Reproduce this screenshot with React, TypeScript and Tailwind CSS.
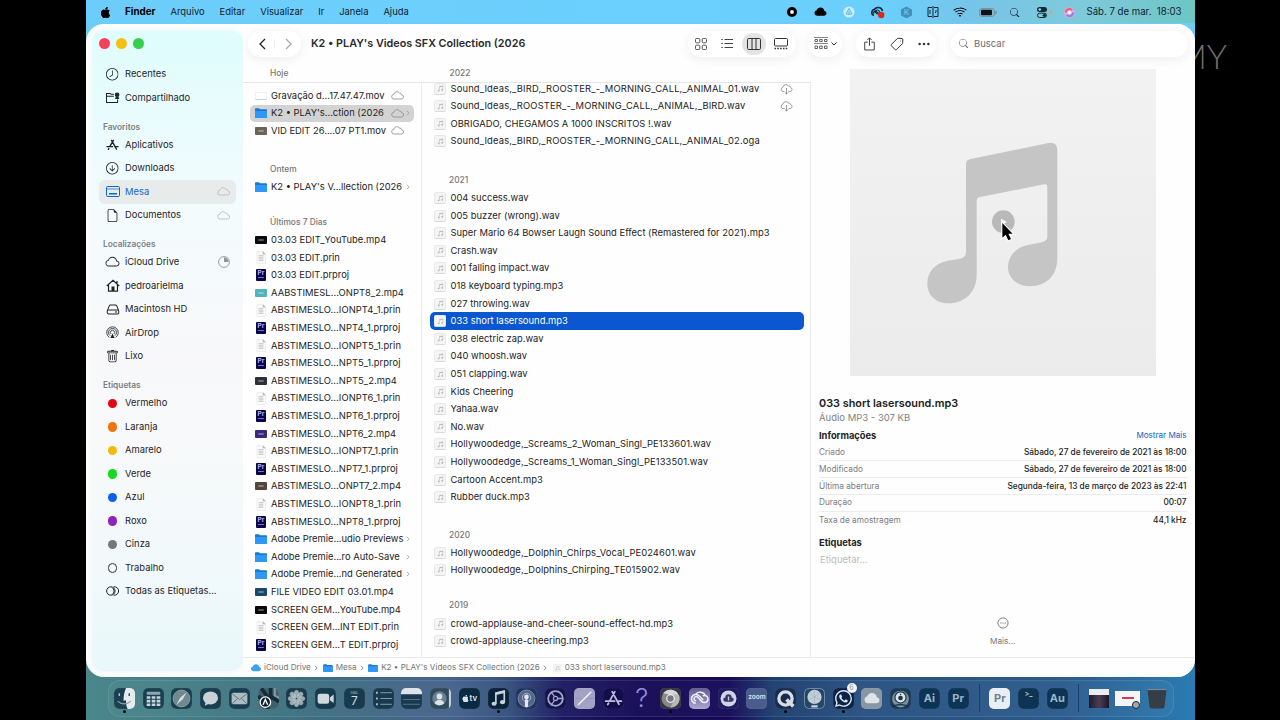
import React from "react";
import { BsApple, BsArrowDownCircle, BsClock, BsCloud, BsCloudFill, BsFileEarmark, BsSearch, BsThreeDots, BsTrash, BsWifi, BsWhatsapp } from "react-icons/bs";

/* ---------- data ---------- */

const menus = ["Arquivo", "Editar", "Visualizar", "Ir", "Janela", "Ajuda"];

const tags = [
  { name: "Vermelho", color: "#e30613" },
  { name: "Laranja", color: "#ec760c" },
  { name: "Amarelo", color: "#f0bb0c" },
  { name: "Verde", color: "#16d81c" },
  { name: "Azul", color: "#0a62ea" },
  { name: "Roxo", color: "#8f23bd" },
  { name: "Cinza", color: "#757779" },
];

type Item = { name: string; kind: string; cloud?: boolean; selected?: boolean; c?: string };

const today: Item[] = [
  { name: "Gravação d...17.47.47.mov", kind: "blank", cloud: true },
  { name: "K2 • PLAY's...ction (2026", kind: "folder", cloud: true, selected: true },
  { name: "VID EDIT 26....07 PT1.mov", kind: "video", c: "#6b6259", cloud: true },
];

const yesterday: Item[] = [{ name: "K2 • PLAY's V...llection (2026", kind: "folder" }];

const lastWeek: Item[] = [
  { name: "03.03 EDIT_YouTube.mp4", kind: "video", c: "#080a10" },
  { name: "03.03 EDIT.prin", kind: "doc" },
  { name: "03.03 EDIT.prproj", kind: "pr" },
  { name: "AABSTIMESL...ONPT8_2.mp4", kind: "video", c: "#4db5bb" },
  { name: "ABSTIMESLO...IONPT4_1.prin", kind: "doc" },
  { name: "ABSTIMESLO...NPT4_1.prproj", kind: "pr" },
  { name: "ABSTIMESLO...IONPT5_1.prin", kind: "doc" },
  { name: "ABSTIMESLO...NPT5_1.prproj", kind: "pr" },
  { name: "ABSTIMESLO...NPT5_2.mp4", kind: "video", c: "#2c3037" },
  { name: "ABSTIMESLO...IONPT6_1.prin", kind: "doc" },
  { name: "ABSTIMESLO...NPT6_1.prproj", kind: "pr" },
  { name: "ABSTIMESLO...NPT6_2.mp4", kind: "video", c: "#38287c" },
  { name: "ABSTIMESLO...IONPT7_1.prin", kind: "doc" },
  { name: "ABSTIMESLO...NPT7_1.prproj", kind: "pr" },
  { name: "ABSTIMESLO...ONPT7_2.mp4", kind: "video", c: "#54463d" },
  { name: "ABSTIMESLO...IONPT8_1.prin", kind: "doc" },
  { name: "ABSTIMESLO...NPT8_1.prproj", kind: "pr" },
  { name: "Adobe Premie...udio Previews", kind: "folder" },
  { name: "Adobe Premie...ro Auto-Save", kind: "folder" },
  { name: "Adobe Premie...nd Generated", kind: "folder" },
  { name: "FILE VIDEO EDIT 03.01.mp4", kind: "video", c: "#17496a" },
  { name: "SCREEN GEM...YouTube.mp4", kind: "video", c: "#08080a" },
  { name: "SCREEN GEM...INT EDIT.prin", kind: "doc" },
  { name: "SCREEN GEM...T EDIT.prproj", kind: "pr" },
];

const files2022 = [
  "Sound_Ideas,_BIRD,_ROOSTER_-_MORNING_CALL,_ANIMAL_01.wav",
  "Sound_Ideas,_ROOSTER_-_MORNING_CALL,_ANIMAL,_BIRD.wav",
  "OBRIGADO, CHEGAMOS A 1000 INSCRITOS !.wav",
  "Sound_Ideas,_BIRD,_ROOSTER_-_MORNING_CALL,_ANIMAL_02.oga",
];
const files2021 = [
  "004 success.wav",
  "005 buzzer (wrong).wav",
  "Super Mario 64 Bowser Laugh Sound Effect (Remastered for 2021).mp3",
  "Crash.wav",
  "001 falling impact.wav",
  "018 keyboard typing.mp3",
  "027 throwing.wav",
  "033 short lasersound.mp3",
  "038 electric zap.wav",
  "040 whoosh.wav",
  "051 clapping.wav",
  "Kids Cheering",
  "Yahaa.wav",
  "No.wav",
  "Hollywoodedge,_Screams_2_Woman_Singl_PE133601.wav",
  "Hollywoodedge,_Screams_1_Woman_Singl_PE133501.wav",
  "Cartoon Accent.mp3",
  "Rubber duck.mp3",
];

const info = [
  ["Criado", "Sábado, 27 de fevereiro de 2021 às 18:00"],
  ["Modificado", "Sábado, 27 de fevereiro de 2021 às 18:00"],
  ["Última abertura", "Segunda-feira, 13 de março de 2023 às 22:41"],
  ["Duração", "00:07"],
  ["Taxa de amostragem", "44,1 kHz"],
];

/* ---------- small icons ---------- */

function CloudIcon({ className = "" }: { className?: string }) {
  return (
    <svg viewBox="0 0 13 10" className={`-mt-px h-[10px] w-[13px] shrink-0 ${className}`} fill="none" stroke="currentColor" strokeWidth="0.8">
      <path d="M3 9h7.3a2.1 2.1 0 0 0 .3-4.2A2 2 0 0 0 8.4 3 3 3 0 0 0 2.9 4.4 2.3 2.3 0 0 0 3 9Z" />
    </svg>
  );
}

function CloudDownIcon() {
  return (
    <svg viewBox="0 0 13 12" className="mr-px h-[12px] w-[13px] shrink-0 text-[#858585]" fill="none" stroke="currentColor" strokeWidth="0.8">
      <path d="M4.5 8.5H3a2.2 2.2 0 0 1-.1-4.3A3 3 0 0 1 8.4 3a2 2 0 0 1 2.2 1.6 2 2 0 0 1-.3 3.9H8.5M6.500 5v6M4.900 9.500l1.600 1.600 1.600-1.600" />
    </svg>
  );
}

function Chevron({ className = "" }: { className?: string }) {
  return (
    <svg viewBox="0 0 5 8" className={`h-[6px] w-[4px] shrink-0 ${className}`} fill="none" stroke="currentColor" strokeWidth="1.1">
      <path d="m1 1 3 3-3 3" />
    </svg>
  );
}

function FolderIcon({ className = "h-[10px] w-[12px]" }: { className?: string }) {
  return (
    <svg viewBox="0 0 12 10" className={`shrink-0 ${className}`}>
      <path d="M0 1.2C0 .5.4.2 1 .2h3l1 1h6c.6 0 1 .3 1 1V9c0 .6-.4 1-1 1H1c-.6 0-1-.4-1-1Z" fill="#1878d2" />
      <path d="M0 2.9h12V9c0 .6-.4 1-1 1H1c-.6 0-1-.4-1-1Z" fill="#2f97f5" />
    </svg>
  );
}

function AudioIcon() {
  return (
    <span className="flex h-[12px] w-[12px] shrink-0 items-center justify-center rounded-[2px] border border-[#e9e9e9] border-b-[#dadada] bg-[#f4f4f4]">
      <svg viewBox="0 0 8 8" className="h-[7px] w-[7px]" fill="#bcbcbc">
        <path d="M2.400 1.400 7 .6v5a1.100 1 0 1 1-.6-.9V2L3 2.600v3.700a1.100 1 0 1 1-.6-.9Z" />
      </svg>
    </span>
  );
}

function FileIcon({ item }: { item: Item }) {
  if (item.kind === "folder") return <FolderIcon />;
  if (item.kind === "doc")
    return (
      <svg viewBox="0 0 12 13" className="h-[13px] w-[12px] shrink-0">
        <path d="M2 .6h6l2.500 2.500v9.300H2Z" fill="#fafafa" stroke="#e3e3e3" strokeWidth="0.6" />
        <path d="M8 .6v2.500h2.500" fill="#bbb" stroke="#b5b5b5" strokeWidth="0.6" />
        <path d="M3.600 4.600h4.800M3.600 6.200h4.800M3.600 7.800h4.800M3.600 9.400h4.800" stroke="#b4b4b4" strokeWidth="0.7" />
      </svg>
    );
  if (item.kind === "pr")
    return (
      <span className="mx-[1px] flex h-[12px] w-[10px] shrink-0 flex-col items-center rounded-[1px] bg-[#0b0349]">
        <span className="text-[6.500px] font-bold leading-[8px] text-[#b9b3f5]">Pr</span>
        <span className="h-[1px] w-[6px] bg-[#7770bd]" />
      </span>
    );
  if (item.kind === "blank") return <span className="h-[8px] w-[12px] shrink-0 border border-b-[#bcd6dc] border-[#f0f2f3] bg-white" />;
  return (
    <span className="flex h-[8px] w-[12px] shrink-0 items-center justify-center rounded-[1px]" style={{ background: item.c }}>
      <span className="h-[2px] w-[6px] rounded-full bg-white/30" />
    </span>
  );
}

/* ---------- menu bar ---------- */

function MenuBar() {
  return (
    <div className="flex h-[24px] items-center bg-[linear-gradient(90deg,#6dcdfa_0%,#6bd0fe_50%,#6bcffc_72%,#76c5e8_80%,#7ec9da_90%,#6cc7c4_100%)] pl-[14px] pr-[13px] pt-[1px] text-[9.400px] text-[#10212e]">
      <BsApple className="-mt-px h-[11px] w-[11px] text-black" />
      <span className="ml-[14px] w-[45.500px] text-[9.800px] font-bold text-black">Finder</span>
      <div className="flex gap-[15px]">
        {menus.map((m) => (
          <span key={m}>{m}</span>
        ))}
      </div>
      <div className="ml-auto flex items-center">
        <svg viewBox="0 0 10 10" className="mr-[17px] h-[10px] w-[10px]"><circle cx="5" cy="5" r="5" /><rect x="3.300" y="3.300" width="3.400" height="3.400" rx="0.700" fill="#fff" /></svg>
        <BsCloudFill className="mr-[15.500px] h-[12px] w-[13px] text-black" />
        <svg viewBox="0 0 12 12" className="mr-[15px] h-[12px] w-[12px]"><circle cx="6" cy="6" r="5.600" fill="#c9efff" /><path d="M6 2.500 3 8h6ZM6 5v4" fill="none" stroke="#5db5df" /></svg>
        <svg viewBox="0 0 15 13" className="mr-[16px] h-[13px] w-[15px]">
          <path d="M4 9.500a3.200 3.200 0 0 1 .5-6.200A4.500 4.500 0 0 1 12.500 5M4 7.500a1.500 1.500 0 0 1 2.200-2L9 8" fill="none" stroke="#0c2634" strokeWidth="1.500" />
          <circle cx="7.500" cy="6" r="2" fill="none" stroke="#0c2634" /><circle cx="11.200" cy="9" r="3.200" fill="#d92a1c" />
        </svg>
        <span className="mr-[15px] flex h-[12px] w-[11px] items-center justify-center bg-[#3f92bb] text-[8px] text-[#87c9e8] [clip-path:polygon(50%_0,100%_25%,100%_75%,50%_100%,0_75%,0_25%)]">K</span>
        <svg viewBox="0 0 12 12" className="mr-[14px] h-[12px] w-[12px]" fill="none" stroke="#123" strokeWidth="1"><path d="M5 1.500H1v9h4M7 1.500h4v9H7M6 0v12M3 4v4M9 4v2l-1 1" /></svg>
        <BsWifi className="mr-[12.500px] h-[14px] w-[14px] text-black" />
        <svg viewBox="0 0 18 9" className="mr-[13px] h-[9px] w-[18px]"><rect x="0.500" y="0.500" width="15" height="8" rx="2.500" fill="#8fb3c5" stroke="#7296a6" /><rect x="2" y="1.800" width="11" height="5.400" rx="1" fill="#0c1216" /><path d="M17 3v3" stroke="#5f7f8f" /></svg>
        <BsSearch className="mr-[17px] h-[9.500px] w-[9.500px]" />
        <svg viewBox="0 0 16 11" className="mr-[11px] h-[11px] w-[16px]"><rect width="10" height="5" rx="2.500" fill="#112b35" /><circle cx="2.800" cy="2.500" r="1.300" fill="#9fd4df" /><rect x="0.500" y="6.200" width="9" height="4.300" rx="2.100" fill="none" stroke="#112b35" /><circle cx="7.300" cy="8.300" r="1.600" fill="#112b35" /><circle cx="14" cy="5.500" r="1.400" fill="#e8a43c" /></svg>
        <svg viewBox="0 0 12 12" className="mr-[11.500px] h-[11px] w-[11px]"><circle cx="6" cy="6" r="5.800" fill="#e9a7d9" /><path d="M2 6a4 4 0 0 1 7-2.500" stroke="#f05a6a" strokeWidth="2" fill="none" /><path d="M10 6a4 4 0 0 1-7 2.500" stroke="#8c7bf0" strokeWidth="2" fill="none" /><circle cx="6" cy="6" r="2" fill="#fff" /></svg>
        <span className="whitespace-pre text-[9.650px]">Sáb. 7 de mar.  18:03</span>
      </div>
    </div>
  );
}

/* ---------- sidebar ---------- */

function SideRow({ icon, label, right, active }: { icon: React.ReactNode; label: string; right?: React.ReactNode; active?: boolean }) {
  return (
    <div className={`flex h-[23.500px] items-center rounded-[6px] pl-[6px] pr-[6px] text-[9.400px] ${active ? "bg-[#e7ebec] text-[#0e66d0]" : "text-[#1f2426]"}`}>
      <span className="mr-[5px] flex w-[15px] justify-center">{icon}</span>
      <span className="flex-1 whitespace-nowrap">{label}</span>
      {right}
    </div>
  );
}

function SideTitle({ children }: { children: React.ReactNode }) {
  return <div className="flex h-[23.500px] items-end pb-[0.500px] pl-[4px] text-[8.300px] font-semibold leading-[12px] text-[#7b8082]">{children}</div>;
}

function Sidebar() {
  return (
    <div className="my-[6px] ml-[6px] flex w-[151px] shrink-0 flex-col rounded-[12px] bg-[linear-gradient(180deg,#dffdfd_0%,#e8fcfd_12%,#f3fbfd_28%,#f8f8fa_50%,#f7f9fa_65%,#f1f9fb_85%,#e8f8fa_100%)] px-[7px] shadow-[0_0_8px_rgba(0,0,0,0.05)]">
      <div className="flex h-[32.700px] items-start gap-[6.500px] pt-[8px]">
        <span className="h-[10.500px] w-[10.500px] rounded-full bg-[#f5405a]" />
        <span className="h-[10.500px] w-[10.500px] rounded-full bg-[#f6c012]" />
        <span className="h-[10.500px] w-[10.500px] rounded-full bg-[#35cf4b]" />
      </div>
      <SideRow icon={<BsClock className="h-[12.500px] w-[12.500px] -scale-x-100" />} label="Recentes" />
      <SideRow
        icon={
          <svg viewBox="0 0 16 13" className="h-[12px] w-[15px] shrink-0" fill="none" stroke="currentColor" strokeWidth="1.100">
            <path d="M9.500 2.500H6.500L5.500 1.500H1.500v10h12V8M1.500 4.500h8" /><circle cx="13" cy="3" r="2" fill="currentColor" /><path d="M10.800 7.500c0-3 4.500-3 4.500 0Z" fill="currentColor" stroke="none" />
          </svg>
        }
        label="Compartilhado"
      />
      <SideTitle>Favoritos</SideTitle>
      <SideRow
        icon={
          <svg viewBox="0 0 14 13" className="h-[12px] w-[13px]" fill="none" stroke="currentColor" strokeWidth="1.500" strokeLinecap="round">
            <path d="M6 1.500 11.300 11M8 1.500 4 8.300M3 10.300l-.5.900M1 8.300h6M10.500 8.300H13" />
          </svg>
        }
        label="Aplicativos"
      />
      <SideRow icon={<BsArrowDownCircle className="h-[12.500px] w-[12.500px]" />} label="Downloads" />
      <SideRow
        active
        icon={
          <svg viewBox="0 0 14 11" className="h-[11px] w-[14px]" fill="none" stroke="currentColor">
            <rect x="0.500" y="0.500" width="13" height="10" rx="1.200" /><path d="M1 3h12" strokeWidth="0.700" /><rect x="3" y="7" width="8" height="1.500" fill="currentColor" stroke="none" />
          </svg>
        }
        label="Mesa"
        right={<CloudIcon className="text-[#b4b9bb]" />}
      />
      <SideRow icon={<BsFileEarmark className="h-[13px] w-[13px]" />} label="Documentos" right={<CloudIcon className="text-[#b4b9bb]" />} />
      <SideTitle>Localizações</SideTitle>
      <SideRow
        icon={<BsCloud className="h-[14px] w-[15px]" />}
        label="iCloud Drive"
        right={<svg viewBox="0 0 12 12" className="h-[12px] w-[12px]"><circle cx="6" cy="6" r="5.400" fill="none" stroke="#8e9293" strokeWidth="0.900" /><path d="M6 6V1.500A4.500 4.500 0 0 1 10.500 6Z" fill="#8e9293" /></svg>}
      />
      <SideRow
        icon={
          <svg viewBox="0 0 14 13" className="h-[13px] w-[14px]" fill="none" stroke="currentColor" strokeWidth="1.200">
            <path d="M.8 7 7 1.200 13.200 7M2.500 6v6.200h9V6M11 4.500V2" /><rect x="5.500" y="7.500" width="3" height="4.500" fill="currentColor" stroke="none" />
          </svg>
        }
        label="pedroarielma"
      />
      <SideRow
        icon={
          <svg viewBox="0 0 14 12" className="h-[11px] w-[14px]" fill="none" stroke="currentColor" strokeWidth="1.100">
            <path d="M1 7 3 1.800Q3.400 1 4.200 1h5.600q.8 0 1.200.8L13 7" /><rect x="0.700" y="6.500" width="12.600" height="4.300" rx="1.500" /><path d="M9 8.700h2.500" />
          </svg>
        }
        label="Macintosh HD"
      />
      <SideRow
        icon={
          <svg viewBox="0 0 14 14" className="h-[13px] w-[13px]" fill="none" stroke="currentColor" strokeWidth="0.900">
            <path d="M3.500 12.200a6.200 6.200 0 1 1 7 0M4.400 10.400a4.300 4.300 0 1 1 5.200 0M5.400 8.600a2.300 2.300 0 1 1 3.200 0" /><path d="m7 8 2.300 5H4.700Z" fill="currentColor" stroke="none" />
          </svg>
        }
        label="AirDrop"
      />
      <SideRow icon={<BsTrash className="h-[13px] w-[13px]" />} label="Lixo" />
      <SideTitle>Etiquetas</SideTitle>
      {tags.map((t) => (
        <SideRow key={t.name} icon={<span className="h-[9.500px] w-[9.500px] rounded-full" style={{ background: t.color }} />} label={t.name} />
      ))}
      <SideRow icon={<span className="h-[9.500px] w-[9.500px] rounded-full border border-[#333]" />} label="Trabalho" />
      <SideRow
        icon={<svg viewBox="0 0 13 10" className="h-[10px] w-[13px]" fill="none" stroke="currentColor"><circle cx="4.800" cy="5" r="4.200" /><path d="M7.500 .9a4.200 4.200 0 1 1 0 8.200" /><path d="M6.200 1.500a4.200 4.200 0 0 1 0 7" /></svg>}
        label="Todas as Etiquetas..."
      />
    </div>
  );
}

/* ---------- toolbar ---------- */

const pill = "flex h-[26px] shrink-0 items-center rounded-full bg-white shadow-[0_2px_12px_rgba(0,0,0,0.07)]";

function Toolbar() {
  return (
    <div className="flex h-[38px] shrink-0 items-center pl-[5px] pr-[7px] pt-[1px] text-[#333]">
      <div className={`${pill} w-[53px]`}>
        <svg viewBox="0 0 53 26" className="h-[26px] w-[53px]" fill="none" strokeWidth="1.300">
          <path d="m17 8-5 5 5 5" stroke="#222" /><path d="M26.500 8v10" stroke="#eee" strokeWidth="1" /><path d="m38 8 5 5-5 5" stroke="#aaa" />
        </svg>
      </div>
      <div className="ml-[10px] w-[377px] whitespace-nowrap pt-[2px] text-[10.780px] font-semibold text-[#2a2a2a]">K2 • PLAY's Videos SFX Collection (2026</div>
      <div className={`${pill} w-[108px] pl-[7px]`}>
        <svg viewBox="0 0 12 12" className="h-[12px] w-[12px]" fill="none" stroke="#555"><rect x="0.500" y="0.500" width="4.300" height="4.300" rx="1" /><rect x="7.200" y="0.500" width="4.300" height="4.300" rx="1" /><rect x="0.500" y="7.200" width="4.300" height="4.300" rx="1" /><rect x="7.200" y="7.200" width="4.300" height="4.300" rx="1" /></svg>
        <svg viewBox="0 0 12 11" className="ml-[14px] h-[11px] w-[12px]" stroke="#444"><path d="M3.500 1.500H12M3.500 5.500H12M3.500 9.500H12M.3 1.500h1.500M.3 5.500h1.500M.3 9.500h1.500" /></svg>
        <span className="ml-[9px] flex h-[22px] w-[24px] items-center justify-center rounded-full bg-[#e3e3e3]">
          <svg viewBox="0 0 14 12" className="h-[12px] w-[14px]" fill="none" stroke="#333"><rect x="0.500" y="0.500" width="13" height="11" rx="1.200" /><path d="M5 .5v11M9 .5v11" /></svg>
        </span>
        <svg viewBox="0 0 14 12" className="ml-[7.500px] h-[12px] w-[14px]" fill="none" stroke="#333"><rect x="0.500" y="0.500" width="13" height="7.500" rx="1" /><path d="M.5 10.500h13" strokeWidth="1.600" strokeDasharray="1.600 1.200" /></svg>
      </div>
      <div className={`${pill} ml-[11.500px] w-[34px] gap-[3px] pl-[6px]`}>
        <svg viewBox="0 0 14 13" className="h-[13px] w-[14px]" fill="none" stroke="#555"><path d="M0 .5h14M0 6.500h14" strokeWidth="0.700" /><path d="M1 2.500h2.500v2H1ZM5.700 2.500h2.500v2H5.700ZM10.500 2.500H13v2h-2.500ZM1 9h2.500v2.500H1ZM5.700 9h2.500v2.500H5.700ZM10.500 9H13v2.500h-2.500Z" strokeWidth="0.900" /></svg>
        <svg viewBox="0 0 6 4" className="h-[4px] w-[6px]" fill="none" stroke="#333"><path d="m.5.500 2.500 2.500L5.500.5" /></svg>
      </div>
      <div className={`${pill} ml-[14.500px] w-[80px] pl-[8px]`}>
        <svg viewBox="0 0 12 15" className="h-[14px] w-[11px]" fill="none" stroke="#333"><path d="M4 5.500H.8v8.500h10.400V5.500H8M6 9.500V1M3.500 3.300 6 .8l2.500 2.500" /></svg>
        <svg viewBox="0 0 14 14" className="ml-[15px] h-[14px] w-[14px]" fill="none" stroke="#333"><path d="M8.200 1.300 12 1.500q.8.100.8.900l-.1 3.400q0 .6-.4 1L6.500 12.600q-.7.600-1.300 0L1.400 8.800q-.6-.6 0-1.300L7 1.800q.5-.5 1.200-.5Z" /><circle cx="10.300" cy="3.900" r="0.500" fill="#333" stroke="none" /></svg>
        <BsThreeDots className="ml-[13px] h-[14px] w-[14px]" />
      </div>
      <div className={`${pill} ml-[15px] flex-1 pl-[7.500px] text-[9.500px] text-[#6c6c6c]`}>
        <BsSearch className="mr-[6px] h-[9.500px] w-[9.500px]" />
        <span className="pt-[1px]">Buscar</span>
      </div>
    </div>
  );
}

/* ---------- columns ---------- */

function LeftRow({ item }: { item: Item }) {
  return (
    <div className={`ml-[7px] flex h-[17.600px] w-[164px] items-center rounded-[5px] pl-[5px] pr-[4px] ${item.selected ? "bg-[#d3d3d3]" : ""}`}>
      <FileIcon item={item} />
      <span className={`ml-[4px] flex-1 whitespace-nowrap ${item.name.includes("_") ? "tracking-[0.05px]" : ""}`}>{item.name}</span>
      {item.cloud && <CloudIcon className="mr-[2.500px] text-[#8c8c8c]" />}
      {item.cloud && !item.selected ? <span className="w-[4px]" /> : null}
      {item.kind === "folder" && <Chevron className="text-[#9a9a9a]" />}
    </div>
  );
}

function AudioRow({ name, cloud }: { name: string; cloud?: boolean }) {
  const selected = name.startsWith("033");
  const spacing = name.startsWith("Sound") ? "tracking-[0.15px]" : name.startsWith("Holly") ? "tracking-[0.08px]" : "tracking-[0.02px]";
  return (
    <div className={`ml-[8px] flex h-[17.600px] w-[373.500px] shrink-0 items-center rounded-[5px] pl-[4px] pr-[10px] ${selected ? "bg-[#0a57d0] text-white" : ""}`}>
      <AudioIcon />
      <span className={`ml-[4.500px] flex-1 whitespace-nowrap ${spacing}`}>{name}</span>
      {cloud && <CloudDownIcon />}
    </div>
  );
}

const groupTitle = "flex items-end text-[8.400px] font-medium leading-[17.600px] text-[#777]";

function Columns() {
  return (
    <div className="flex w-[568px] shrink-0 flex-col">
      <div className="flex h-[21px] shrink-0 items-center border-b border-[#e6e6e6] pt-[2px] text-[8.400px] font-medium text-[#777]">
        <span className="w-[206.500px] pl-[27px]">Hoje</span>
        <span>2022</span>
      </div>
      <div className="flex min-h-0 flex-1 overflow-hidden text-[9.400px] text-[#232323]">
        <div className="w-[179px] shrink-0 border-r border-[#ececec] pt-[4px]">
          {today.map((i) => <LeftRow key={i.name} item={i} />)}
          <div className={`${groupTitle} h-[38.800px] pl-[27px]`}>Ontem</div>
          {yesterday.map((i) => <LeftRow key={i.name} item={i} />)}
          <div className={`${groupTitle} h-[35.200px] pl-[27px]`}>Últimos 7 Dias</div>
          {lastWeek.map((i) => <LeftRow key={i.name} item={i} />)}
        </div>
        <div className="flex flex-1 flex-col border-r border-[#ececec]">
          <div className="-mt-[3.200px]">
            {files2022.map((f, i) => <AudioRow key={f} name={f} cloud={i < 2} />)}
          </div>
          <div className={`${groupTitle} h-[39.100px] pl-[27px]`}>2021</div>
          {files2021.map((f) => <AudioRow key={f} name={f} />)}
          <div className={`${groupTitle} h-[38.600px] pl-[27px]`}>2020</div>
          <AudioRow name="Hollywoodedge,_Dolphin_Chirps_Vocal_PE024601.wav" />
          <div className="-mt-[1px]">
            <AudioRow name="Hollywoodedge,_Dolphins_Chirping_TE015902.wav" />
          </div>
          <div className={`${groupTitle} h-[36.200px] pl-[27px]`}>2019</div>
          <AudioRow name="crowd-applause-and-cheer-sound-effect-hd.mp3" />
          <AudioRow name="crowd-applause-cheering.mp3" />
        </div>
      </div>
    </div>
  );
}

function Preview() {
  return (
    <div className="flex flex-1 flex-col pl-[8px] pr-[8px] pt-[7px] text-[#222]">
      <svg viewBox="0 12 918 921" className="ml-[31px] h-[307px] w-[306px] shrink-0">
        <defs>
          <linearGradient id="cover" x1="0" x2="0" y1="0" y2="1"><stop offset="0" stopColor="#f2f2f2" /><stop offset="1" stopColor="#ebebeb" /></linearGradient>
        </defs>
        <rect y="12" width="918" height="921" fill="url(#cover)" />
        <path d="M348 297Q348 285 362 282L596 234Q622 230 622 256V580C622 630 590 664 540 664C500 664 474 638 474 606C474 575 495 550 530 541L575 532Q592 528 592 514V366Q592 356 582 358L390 396Q380 398 380 408V630C380 680 345 715 296 715C258 715 232 690 232 656C232 620 255 596 290 588L330 581Q348 577 348 562Z" fill="#c5c5c5" />
        <circle cx="460" cy="470" r="34" fill="#b9b9b9" />
        <path d="m453 461 17 10-17 10Z" fill="#fff" />
        {/* pointer */}
        <path d="M457 474V518L467 509L475 526L483 522L475 506H488Z" stroke="#fff" strokeWidth="6" fill="#000" paintOrder="stroke" />
      </svg>
      <div className="mt-[18px] pt-[1px] text-[10.850px] font-semibold leading-[17px] text-[#222]">033 short lasersound.mp3</div>
      <div className="-mt-px text-[9.500px] leading-[14px] text-[#828282]">Áudio MP3 - 307 KB</div>
      <div className="flex h-[19px] items-center justify-between pt-[2px]">
        <span className="text-[9.300px] font-bold">Informações</span>
        <span className="text-[8.100px] text-[#1560bd]">Mostrar Mais</span>
      </div>
      <div className="divide-y divide-[#ececec]">
        {info.map(([k, v]) => (
          <div key={k} className="flex h-[16.900px] items-center justify-between text-[8.280px]">
            <span className="text-[#7d7d7d]">{k}</span>
            <span className="font-medium text-[#222]">{v}</span>
          </div>
        ))}
      </div>
      <div className="mt-[8px] text-[9.300px] font-bold leading-[14px]">Etiquetas</div>
      <div className="mt-[1.500px] pl-[1px] text-[9.500px] leading-[15px] text-[#bcbcbc]">Etiquetar...</div>
      <div className="mt-auto mb-[10px] flex flex-col items-center text-[8.200px] leading-[12px] text-[#777]">
        <svg viewBox="0 0 12 12" className="mb-[6px] h-[12px] w-[12px]" fill="none" stroke="#777"><circle cx="6" cy="6" r="5.100" strokeWidth="0.900" /><path d="M3.200 6h1.200M5.400 6h1.200M7.600 6h1.200" strokeWidth="1.100" /></svg>
        Mais...
      </div>
    </div>
  );
}

function PathBar() {
  return (
    <div className="flex h-[20px] shrink-0 items-center border-t border-[#e8e8e8] pl-[8px] text-[8.100px] text-[#757575]">
      <BsCloudFill className="mr-[3px] h-[10px] w-[10px] text-[#39a3f0]" />
      iCloud Drive
      <Chevron className="ml-[3px] mr-[5px]" />
      <FolderIcon className="mr-[3px] h-[8px] w-[10px]" />
      Mesa
      <Chevron className="ml-[3px] mr-[4.500px]" />
      <FolderIcon className="mr-[3px] h-[8px] w-[10px]" />
      K2 • PLAY's Videos SFX Collection (2026
      <Chevron className="ml-[3px] mr-[4px]" />
      <span className="mr-[2px] scale-75"><AudioIcon /></span>
      033 short lasersound.mp3
    </div>
  );
}

/* ---------- dock ---------- */

function Tile({ children, tone = "bg-[#082a3c]/75", running }: { children?: React.ReactNode; tone?: string; running?: boolean }) {
  return (
    <div className="relative flex h-[36px] w-[28.750px] shrink-0 items-center justify-center">
      <span className={`flex h-[21px] w-[21px] items-center justify-center overflow-hidden rounded-[5px] text-[11px] font-bold text-[#9fb6c6] shadow-[inset_0_0_1px_rgba(255,255,255,0.35)] ${tone}`}>{children}</span>
      {running && <span className="absolute bottom-[3px] h-[3px] w-[3px] rounded-full bg-[#04080f]" />}
    </div>
  );
}

function Art({ children }: { children: React.ReactNode }) {
  return (
    <svg viewBox="0 0 20 20" className="h-[21px] w-[21px]" fill="none" stroke="#c8d3da" strokeWidth="1.200">
      {children}
    </svg>
  );
}

function Dock() {
  return (
    <div className="ml-[21.500px] mt-[2.500px] flex h-[37px] w-[1066px] items-center rounded-[12px] border border-white/10 bg-white/[0.03] pl-[1.500px]">
      <Tile running><Art><path d="M11.500 0H20v20h-7c-1.500-3-1.500-5-1.500-8H9c.2-5 1-9 2.500-12Z" fill="#e6ecee" stroke="none" /><path d="M5 5v2.500" /><path d="M14.500 5v2.500" stroke="#234" /><path d="M3.500 12.500c3.500 3.500 9 3.500 12.500 0" stroke="#8ea3ac" /></Art></Tile>
      <Tile><Art><rect x="3.500" y="3.500" width="13" height="3" rx="1" fill="#8fa6ac" stroke="none" /><path d="M3.500 9h3.500M8.300 9h3.500M13 9h3.500M3.500 12.500h3.500M8.300 12.500h3.500M13 12.500h3.500M3.500 16h3.500M8.300 16h3.500M13 16h3.500" strokeWidth="2.400" /></Art></Tile>
      <Tile><Art><circle cx="10" cy="10" r="8" fill="#718891" stroke="#8fa4ab" strokeWidth="0.800" /><path d="m15 4-4 7-6 5 4-7Z" fill="#d7e0e3" stroke="none" /></Art></Tile>
      <Tile><Art><ellipse cx="10" cy="9.500" rx="7.200" ry="6.200" fill="#c9d3d6" stroke="none" /><path d="m5.500 13-1 4 4-2" fill="#c9d3d6" stroke="none" /></Art></Tile>
      <Tile><Art><rect x="2.500" y="4.500" width="15" height="11" rx="1.500" fill="#aebcc2" stroke="none" /><path d="m3 5.500 7 5.500 7-5.500M3 15l5-5M17 15l-5-5" stroke="#5b7480" strokeWidth="0.900" /></Art></Tile>
      <Tile tone="bg-[#405f6c]"><Art><path d="M3 0 11 11 9 20M12 0v8l8 5M0 8l8 5" stroke="#122d39" strokeWidth="3.500" /><path d="M16 0v7l5 3" stroke="#8398a2" strokeWidth="2" /><circle cx="7" cy="13.500" r="5" fill="#0d2230" stroke="#fff" /><path d="m4.800 16 2.200-5 2.200 5M7 14.500h.1" stroke="#fff" strokeWidth="1.300" /></Art></Tile>
      <Tile><Art>{[0, 45, 90, 135, 180, 225, 270, 315].map((a) => <ellipse key={a} cx="10" cy="5.600" rx="2.500" ry="3.800" fill="#bec8cd" fillOpacity="0.800" stroke="#617884" strokeWidth="0.300" transform={`rotate(${a} 10 10)`} />)}</Art></Tile>
      <Tile><Art><rect x="2.500" y="5.500" width="11" height="9.500" rx="2.200" fill="#d0d8dc" stroke="none" /><path d="m14.200 9 3.600-2.700v8l-3.600-2.700Z" fill="#d0d8dc" stroke="none" /></Art></Tile>
      <Tile><span className="flex flex-col items-center font-normal"><span className="text-[4px] leading-[5px]">Sáb.</span><span className="text-[12px] leading-[12px] text-[#d5dfe5]">7</span></span></Tile>
      <Tile><Art><path d="M7 4.500h11M7 10h11M7 15.500h11" stroke="#8fa0ae" strokeWidth="0.900" /><path d="M3 4.500h1.500M3 10h1.500M3 15.500h1.500" strokeWidth="1.800" /></Art></Tile>
      <Tile><Art><path d="M0 0h20v6H0Z" fill="#dce4e7" stroke="none" /><path d="M2 11h16M2 15.500h16" stroke="#667d8c" strokeWidth="0.800" /></Art></Tile>
      <Tile tone="bg-[#314b5d]"><Art><circle cx="9" cy="10" r="6.800" fill="#6b8090" stroke="none" /><circle cx="9" cy="8" r="2.700" fill="#dde4e8" stroke="none" /><path d="M4.500 14.500c1-4.500 8-4.500 9 0-2 2.500-7 2.500-9 0Z" fill="#dde4e8" stroke="none" /><path d="M19 1v18" stroke="#c6d2da" strokeWidth="2" /></Art></Tile>
      <Tile tone="bg-[#0a2a42]"><span className="flex items-center gap-[1px] text-[8px] font-semibold text-[#dce3ec]"><BsApple className="h-[7px] w-[7px]" />tv</span></Tile>
      <Tile running tone="bg-[#082338]"><Art><path d="M7.500 15V5l8-2v10.500" stroke="#c7d0dc" strokeWidth="1.600" /><path d="M7.500 5.500l8-2" strokeWidth="2.500" /><ellipse cx="5.800" cy="15" rx="2.400" ry="2" fill="#c7d0dc" stroke="none" /><ellipse cx="13.800" cy="13.500" rx="2.400" ry="2" fill="#c7d0dc" stroke="none" /></Art></Tile>
      <Tile tone="bg-[#20345e]"><Art><circle cx="10" cy="10" r="8" fill="#52658a" stroke="#8592b0" strokeWidth="0.800" /><circle cx="10" cy="9" r="4" stroke="#aab4cc" strokeWidth="0.900" /><circle cx="10" cy="8.500" r="2.200" fill="#e4e8f1" stroke="none" /><path d="M10 12v5" stroke="#e4e8f1" strokeWidth="3" strokeLinecap="round" /></Art></Tile>
      <Tile tone="bg-[#14134b]"><Art><circle cx="10" cy="10" r="7" stroke="#a2a7ca" strokeWidth="1.700" /><circle cx="10" cy="10" r="2" stroke="#a2a7ca" /><path d="m9 8-3.500-4.500M9 12l-3.500 4.500M12 10h5" stroke="#a2a7ca" /></Art></Tile>
      <Tile tone="bg-[#a3a2c4]"><Art><path d="m3 17 2.500-1.500L17 4l-1-1L4.500 14.500Z" fill="#f4f4fb" stroke="none" /><path d="M1 10h5M12 10h8" stroke="#8b8ab5" strokeWidth="0.600" /></Art></Tile>
      <Tile tone="bg-[#130d4d]"><Art><path d="m8.700 3.500 6.500 12M11.300 3.500 6.300 12.500M5.300 14.500l-.8 1.300M2.500 12.500h8.500M13.500 12.500h4" stroke="#bdbddd" strokeWidth="1.700" strokeLinecap="round" /></Art></Tile>
      <div className="flex h-[36px] w-[28.750px] shrink-0 items-center justify-center text-[26px] font-light leading-[34px] text-[#928bd5]">?</div>
      <Tile running tone="bg-[#353541]"><Art><circle cx="10" cy="10" r="8.500" fill="#88888c" stroke="none" /><path d="M10 6.500h8A8.500 8.500 0 0 1 10 18.500l3-6.500" fill="#b8b8bb" stroke="none" /><path d="M3 5a8.500 8.500 0 0 1 14.500 1.500H10" fill="#d6d6d8" stroke="none" /><circle cx="10" cy="10" r="3.600" fill="#77777d" stroke="#eee" strokeWidth="1.200" /></Art></Tile>
      <Tile tone="bg-[linear-gradient(180deg,#625b93,#aaa4d0)]"><Art><path d="M6.500 14.500a4.200 4.200 0 1 1 3-7.200l4 4.200M6.800 12.200a2 2 0 1 1 1.500-3.300l3.500 3.600c3 3 7 .5 6.200-2.800-.6-2.300-3-3.200-4.800-2.200M6 6.500c2.500-4 8.500-3 9.500 1" stroke="#f1f0fb" strokeWidth="1.400" /></Art></Tile>
      <Tile tone="bg-[#201b60]"><Art><circle cx="10" cy="10" r="7.600" fill="#d3d3e8" stroke="none" /><path d="M7 13a2 2 0 0 1 0-4 3 3 0 0 1 6 0 2 2 0 0 1 0 4Z" fill="#38356f" stroke="none" /><path d="M10 8v4" /></Art></Tile>
      <Tile tone="bg-[#4b5b8b]"><span className="text-[6.500px] font-semibold text-[#dfe4f1]">zoom</span></Tile>
      <Tile running tone="bg-[#172c4f]"><Art><circle cx="10" cy="10" r="6.300" stroke="#d9dee6" strokeWidth="3.200" /><path d="m11 11 6.500 6.500" stroke="#d9dee6" strokeWidth="3.500" /></Art></Tile>
      <Tile tone="bg-[#214769]"><Art><rect x="0.500" y="0.500" width="19" height="19" rx="4.500" stroke="#8ba3b9" strokeWidth="0.700" /><circle cx="10" cy="8.500" r="6.800" fill="#c3ced7" stroke="none" /><path d="m10 8.500-5-4M10 8.500l5-4M10 8.500l-6 3M10 8.500l6 3M10 8.500v7M10 8.500v-7" stroke="#a0b1be" strokeWidth="0.600" /><path d="M7 17.500h6" strokeWidth="2" /></Art></Tile>
      <div className="relative">
        <Tile running tone="bg-[#0b2348]"><BsWhatsapp className="h-[17px] w-[17px] text-[#e2e9f0]" /></Tile>
        <span className="absolute right-[1px] top-[3px] flex h-[10px] w-[10px] items-center justify-center rounded-full bg-[#f3f5f7] text-[7px] leading-[10px] text-[#8b95a0]">6</span>
      </div>
      <Tile tone="bg-[#8797a5]"><BsCloudFill className="h-[15px] w-[16px] text-[#dde3e8]" /></Tile>
      <Tile tone="bg-[#183b59]"><Art><circle cx="10" cy="10.500" r="8" fill="#7d909f" stroke="none" /><circle cx="10" cy="9" r="5.300" fill="#dce3e8" stroke="#223a50" /><path d="M10 5.500v1.500" stroke="#223a50" /><circle cx="10" cy="9.500" r="2.200" fill="#1c3347" stroke="none" /><path d="M3 18c1-3 13-3 14 0" stroke="#183247" /></Art></Tile>
      <Tile tone="bg-[#0d3455]">Ai</Tile>
      <Tile tone="bg-[#0d3455]">Pr</Tile>
      <span className="mx-[6px] h-[28px] w-[1px] bg-[#163f68]" />
      <Tile tone="bg-[#e8eef4]"><span className="text-[#6b7f92]">Pr</span></Tile>
      <Tile tone="bg-[#0d3455]"><span className="-mt-[7px] text-[7px] font-normal text-white">&gt;_</span></Tile>
      <Tile tone="bg-[#0d3455]">Au</Tile>
      <span className="mx-[6px] h-[28px] w-[1px] bg-[#163f68]" />
      {/* minimized windows */}
      <div className="flex w-[28.750px] justify-center">
        <div className="h-[19px] w-[20px] border-t-[6px] border-[#ecebf0] bg-[linear-gradient(90deg,#211a2d,#4b3e53_50%,#1e172a)]" />
      </div>
      <div className="relative flex w-[28.750px] justify-center">
        <div className="flex h-[15px] w-[25px] items-center justify-center bg-[#f5f5f7]"><span className="h-[2px] w-[12px] bg-[#c9414d]" /></div>
        <span className="absolute -bottom-[3px] right-[2px] h-[8px] w-[8px] rounded-full border border-[#202833] bg-[#a3a7ab]" />
      </div>
      <div className="flex w-[28.750px] justify-center">
        <svg viewBox="0 0 20 21" className="h-[21px] w-[20px]"><path d="M.5 1.500h19l-2 17q-.2 2-2 2h-11q-1.800 0-2-2Z" fill="#353d47" /><path d="M.5 1.500h19" stroke="#7c8994" strokeWidth="1.200" /></svg>
      </div>
    </div>
  );
}

export default function App() {
  return (
    <div className="relative h-[720px] w-[1280px] overflow-hidden bg-black font-['Inter',sans-serif]">
      <div className="ml-[86px] flex h-full w-[1108.500px] flex-col bg-[linear-gradient(90deg,#4a878b_0%,#3d6f80_20%,#46628b_33%,#34507c_38%,#1b1960_43%,#140a55_50%,#140a58_58%,#1d3e6e_62%,#28507f_70%,#2b5a8c_88%,#2a7cb2_100%)]">
        <div className="bg-[#6dcffb]">
          <MenuBar />
        </div>
        <div className="-mt-px -mb-px bg-[linear-gradient(180deg,#6cccf2_0%,#6cccf2_50%,transparent_50%)] pt-px pb-px">
          <div className="flex h-[653px] overflow-hidden rounded-[18px] bg-[#fdfefe]">
            <Sidebar />
            <div className="flex min-w-0 flex-1 flex-col bg-[#fefefe]">
              <Toolbar />
              <div className="flex min-h-0 flex-1">
                <Columns />
                <Preview />
              </div>
              <PathBar />
            </div>
          </div>
        </div>
        <Dock />
      </div>
      {/* channel mark over the right edge */}
      <div className="absolute left-[1175px] top-[35px] h-[42px] w-[60px] overflow-hidden pl-[1px] font-['Lato',sans-serif] text-[34px] font-light leading-[42px] text-[#6e6e6e] [clip-path:inset(0_0_0_20px)]">MY</div>
    </div>
  );
}
